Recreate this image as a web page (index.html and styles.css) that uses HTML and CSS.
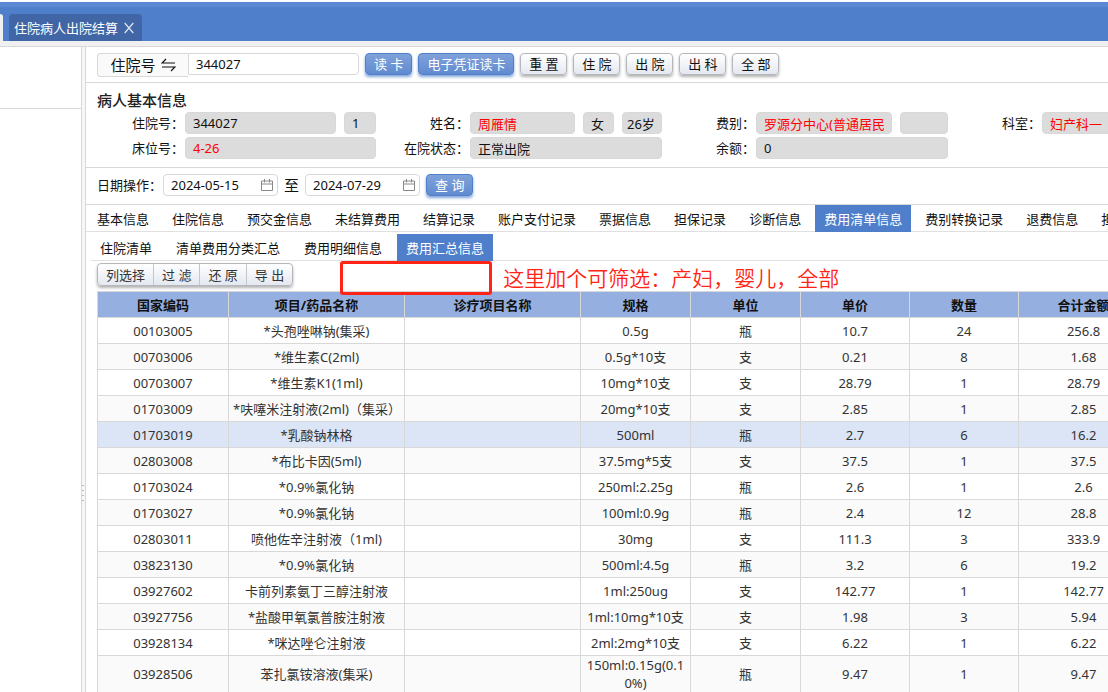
FILE: index.html
```html
<!DOCTYPE html>
<html lang="zh-CN">
<head>
    <meta charset="UTF-8">
    <meta name="viewport" content="width=device-width, initial-scale=1.0">
    <title>住院病人出院结算</title>
    <link rel="stylesheet" href="styles.css">
</head>
<body>
    <header class="topbar">
        <div class="prev-tab"></div>
        <div class="page-tab">
            <span>住院病人出院结算</span>
            <button class="tab-close" aria-label="关闭">
                <svg width="10" height="12" viewBox="0 0 10 12"><path d="M0.7 1L9.3 11M9.3 1L0.7 11" fill="none" stroke="currentColor" stroke-width="1.2"/></svg>
            </button>
        </div>
    </header>

    <div class="layout">
        <aside class="sidebar">
            <div class="sidebar-head"></div>
        </aside>
        <div class="splitter"><i></i><i></i><i></i><i></i></div>

        <main class="content">
            <!-- 查询栏 -->
            <div class="search-bar">
                <div class="search-group">
                    <button class="search-type" id="searchType">住院号
                        <svg width="15" height="14" viewBox="0 0 15 14"><path d="M5 1L1 5H14M1 9H14L10 13" fill="none" stroke="currentColor" stroke-width="1.2"/></svg>
                    </button>
                    <input class="search-input" type="text" value="344027" aria-labelledby="searchType">
                </div>
                <button class="btn btn-primary">读 卡</button>
                <button class="btn btn-primary">电子凭证读卡</button>
                <button class="btn">重 置</button>
                <button class="btn">住 院</button>
                <button class="btn">出 院</button>
                <button class="btn">出 科</button>
                <button class="btn">全 部</button>
            </div>

            <!-- 病人基本信息 -->
            <section class="patient">
                <h2>病人基本信息</h2>
                <div class="patient-grid">
                    <label for="inNo">住院号：</label>
                    <div class="fields"><input id="inNo" value="344027" readonly><input class="w-32" value="1" aria-label="住院次数" readonly></div>
                    <label for="name">姓名：</label>
                    <div class="fields"><input id="name" class="red" value="周雁情" readonly><input class="w-31" value="女" aria-label="性别" readonly><input class="w-40" value="26岁" aria-label="年龄" readonly></div>
                    <label for="feeType">费别：</label>
                    <div class="fields"><input id="feeType" class="red" value="罗源分中心(普通居民" readonly><input class="w-48" value="" aria-label="费别说明" readonly></div>
                    <label for="dept">科室：</label>
                    <div class="fields"><input id="dept" class="red" value="妇产科一" readonly></div>

                    <label for="bed">床位号：</label>
                    <div class="fields"><input id="bed" class="red" value="4-26" readonly></div>
                    <label for="state">在院状态：</label>
                    <div class="fields"><input id="state" value="正常出院" readonly></div>
                    <label for="balance">余额：</label>
                    <div class="fields"><input id="balance" value="0" readonly></div>
                </div>
            </section>

            <!-- 日期 -->
            <div class="date-bar">
                <label for="dateFrom">日期操作：</label>
                <div class="date-box">
                    <input id="dateFrom" type="text" value="2024-05-15">
                    <svg width="12" height="12" viewBox="0 0 12 12"><path d="M0.5 2H11.5V11.5H0.5ZM0.5 5H11.5M3.5 0V3.5M8.5 0V3.5" fill="none" stroke="currentColor"/></svg>
                </div>
                <label class="date-to" for="dateTo">至</label>
                <div class="date-box">
                    <input id="dateTo" type="text" value="2024-07-29">
                    <svg width="12" height="12" viewBox="0 0 12 12"><path d="M0.5 2H11.5V11.5H0.5ZM0.5 5H11.5M3.5 0V3.5M8.5 0V3.5" fill="none" stroke="currentColor"/></svg>
                </div>
                <button class="btn btn-primary">查 询</button>
            </div>

            <nav class="tabs">
                <button>基本信息</button>
                <button>住院信息</button>
                <button>预交金信息</button>
                <button>未结算费用</button>
                <button>结算记录</button>
                <button>账户支付记录</button>
                <button>票据信息</button>
                <button>担保记录</button>
                <button>诊断信息</button>
                <button class="active">费用清单信息</button>
                <button>费别转换记录</button>
                <button>退费信息</button>
                <button>担保信息</button>
            </nav>
            <nav class="tabs sub-tabs">
                <button>住院清单</button>
                <button>清单费用分类汇总</button>
                <button>费用明细信息</button>
                <button class="active">费用汇总信息</button>
            </nav>

            <div class="toolbar">
                <div class="btn-group">
                    <button>列选择</button>
                    <button>过 滤</button>
                    <button>还 原</button>
                    <button>导 出</button>
                </div>
                <div class="mark-box"></div>
                <p class="mark-text">这里加个可筛选：产妇，婴儿，全部</p>
            </div>

            <table class="fee-table">
                <colgroup>
                    <col class="c-code"><col class="c-name"><col class="c-name"><col class="c-spec"><col class="c-spec"><col class="c-num"><col class="c-num"><col class="c-total">
                </colgroup>
                <thead>
                    <tr><th>国家编码</th><th>项目/药品名称</th><th>诊疗项目名称</th><th>规格</th><th>单位</th><th>单价</th><th>数量</th><th>合计金额</th></tr>
                </thead>
                <tbody>
                    <tr><td>00103005</td><td>*头孢唑啉钠(集采)</td><td></td><td>0.5g</td><td>瓶</td><td>10.7</td><td>24</td><td>256.8</td></tr>
                    <tr><td>00703006</td><td>*维生素C(2ml)</td><td></td><td>0.5g*10支</td><td>支</td><td>0.21</td><td>8</td><td>1.68</td></tr>
                    <tr><td>00703007</td><td>*维生素K1(1ml)</td><td></td><td>10mg*10支</td><td>支</td><td>28.79</td><td>1</td><td>28.79</td></tr>
                    <tr><td>01703009</td><td>*呋噻米注射液(2ml)（集采）</td><td></td><td>20mg*10支</td><td>支</td><td>2.85</td><td>1</td><td>2.85</td></tr>
                    <tr class="selected"><td>01703019</td><td>*乳酸钠林格</td><td></td><td>500ml</td><td>瓶</td><td>2.7</td><td>6</td><td>16.2</td></tr>
                    <tr><td>02803008</td><td>*布比卡因(5ml)</td><td></td><td>37.5mg*5支</td><td>支</td><td>37.5</td><td>1</td><td>37.5</td></tr>
                    <tr><td>01703024</td><td>*0.9%氯化钠</td><td></td><td>250ml:2.25g</td><td>瓶</td><td>2.6</td><td>1</td><td>2.6</td></tr>
                    <tr><td>01703027</td><td>*0.9%氯化钠</td><td></td><td>100ml:0.9g</td><td>瓶</td><td>2.4</td><td>12</td><td>28.8</td></tr>
                    <tr><td>02803011</td><td>喷他佐辛注射液（1ml)</td><td></td><td>30mg</td><td>支</td><td>111.3</td><td>3</td><td>333.9</td></tr>
                    <tr><td>03823130</td><td>*0.9%氯化钠</td><td></td><td>500ml:4.5g</td><td>瓶</td><td>3.2</td><td>6</td><td>19.2</td></tr>
                    <tr><td>03927602</td><td>卡前列素氨丁三醇注射液</td><td></td><td>1ml:250ug</td><td>支</td><td>142.77</td><td>1</td><td>142.77</td></tr>
                    <tr><td>03927756</td><td>*盐酸甲氧氯普胺注射液</td><td></td><td>1ml:10mg*10支</td><td>支</td><td>1.98</td><td>3</td><td>5.94</td></tr>
                    <tr><td>03928134</td><td>*咪达唑仑注射液</td><td></td><td>2ml:2mg*10支</td><td>支</td><td>6.22</td><td>1</td><td>6.22</td></tr>
                    <tr><td>03928506</td><td>苯扎氯铵溶液(集采)</td><td></td><td>150ml:0.15g(0.10%)</td><td>瓶</td><td>9.47</td><td>1</td><td>9.47</td></tr>
                </tbody>
            </table>
        </main>
    </div>
</body>
</html>
```
FILE: styles.css
```css
* {
    margin: 0;
    padding: 0;
    box-sizing: border-box;
}

body {
    height: 100vh;
    display: flex;
    flex-direction: column;
    overflow: hidden;
    font-family: "Noto Sans", "Noto Sans CJK SC", sans-serif;
    font-size: 13px;
    line-height: 18px;
    color: #111;
    background: #fff;
}

button,
input {
    font: inherit;
    color: inherit;
    border: none;
    background: none;
    outline: none;
}

button {
    cursor: pointer;
    white-space: nowrap;
}

/* 顶部页签 */
.topbar {
    flex: none;
    display: flex;
    align-items: flex-end;
    gap: 6px;
    height: 41px;
    border-top: 2px solid #fff;
    background: linear-gradient(#5a88d2 5px, #4f7fcb 5px);
}

.prev-tab {
    width: 3px;
    height: 27px;
    background: #f0f0f0;
    border-radius: 0 4px 0 0;
}

.page-tab {
    display: flex;
    align-items: center;
    gap: 6px;
    height: 27px;
    padding: 0 8px 0 5px;
    color: #fff;
    background: #4066a6;
    border-radius: 4px 4px 0 0;
}

.tab-close {
    display: flex;
    color: #dfe7f5;
}

.layout {
    flex: 1;
    min-height: 0;
    display: flex;
    border-top: 5px solid #f0f0f0;
}

.sidebar {
    flex: none;
    width: 82px;
    border-top: 1px solid #d8d8d8;
    border-right: 1px solid #d8d8d8;
}

.sidebar-head {
    height: 62px;
    border-bottom: 1px solid #d8d8d8;
}

.splitter {
    flex: none;
    width: 4px;
    display: flex;
    flex-direction: column;
    justify-content: center;
    gap: 4px;
    padding-top: 246px;
    border-top: 1px solid #d8d8d8;
    border-right: 1px solid #d8d8d8;
    background: #f7f7f7;
}

.splitter i {
    width: 2px;
    height: 1px;
    background: #bbb;
}

.content {
    flex: 1;
    min-width: 0;
    overflow: hidden;
    border-top: 1px solid #d8d8d8;
}

/* 查询栏 */
.search-bar {
    display: flex;
    align-items: flex-start;
    gap: 6px;
    height: 36px;
    padding: 6px 11px 0;
    border-bottom: 1px solid #d8d8d8;
}

.search-group {
    display: flex;
    align-items: flex-start;
    width: 262px;
}

.search-type {
    display: flex;
    align-items: center;
    justify-content: center;
    gap: 5px;
    width: 91px;
    height: 24px;
    font-size: 15px;
    border: 1px solid #d8d8d8;
    border-right: none;
    border-radius: 4px 0 0 4px;
    background: #fafafa;
}

.search-input {
    flex: 1;
    min-width: 0;
    height: 22px;
    padding: 0 7px;
    border: 1px solid #d8d8d8;
    border-radius: 0 4px 4px 0;
}

.btn {
    flex: none;
    min-width: 47px;
    height: 22px;
    padding: 0 7px;
    line-height: 20px;
    border: 1px solid #b5b7bb;
    border-radius: 4px;
    background: linear-gradient(#fff, #e4e8f0);
    box-shadow: 0 2px 3px rgba(0, 0, 0, 0.3);
}

.btn-primary {
    padding: 0 8px;
    color: #fff;
    border-color: #4f7fcb;
    background: linear-gradient(#80a2da, #618bd0);
    box-shadow: 0 2px 3px rgba(79, 127, 203, 0.7);
}

/* 病人基本信息 */
.patient {
    height: 85px;
    padding: 7px 0 0 11px;
    border-bottom: 1px solid #d8d8d8;
}

.patient h2 {
    margin-bottom: 2px;
    font-size: 15px;
    line-height: 20px;
    font-weight: 500;
    color: #222;
}

.patient-grid {
    display: grid;
    grid-template-columns: 88px 191px 94px 192px 94px 192px 94px 192px;
    row-gap: 3px;
    align-items: center;
}

.patient-grid label {
    text-align: right;
    padding-right: 1px;
}

.fields {
    display: flex;
    gap: 8px;
}

.fields input {
    flex: 1;
    min-width: 0;
    height: 22px;
    padding: 0 7px;
    border: 1px solid #d8d8d8;
    border-radius: 4px;
    background: #dcdcdc;
}

.fields .w-31 {
    flex: 0 0 31px;
}

.fields .w-32 {
    flex: 0 0 32px;
}

.fields .w-40 {
    flex: 0 0 40px;
    padding: 0 4px;
}

.fields .w-48 {
    flex: 0 0 48px;
}

.fields .red {
    color: #f00;
}

/* 日期 */
.date-bar {
    display: flex;
    align-items: center;
    height: 37px;
    padding: 0 11px 2px;
    border-bottom: 1px solid #d8d8d8;
}

.date-bar label {
    margin-right: 1px;
}

.date-box {
    display: flex;
    align-items: center;
    width: 115px;
    height: 22px;
    padding: 0 4px 0 7px;
    border: 1px solid #d8d8d8;
    border-radius: 4px;
    color: #888;
}

.date-box input {
    flex: 1;
    min-width: 0;
    color: #111;
}

.date-bar .date-to {
    margin: 0 6px;
    font-size: 15px;
}

.date-bar .btn {
    margin-left: 6px;
}

/* 页签 */
.tabs {
    display: flex;
    gap: 5px;
    height: 27px;
    padding-left: 2px;
    border-bottom: 1px solid #e0e0e0;
}

.tabs button {
    flex: none;
    height: 27px;
    padding: 0 9px;
}

.tabs .active {
    color: #fff;
    background: #4f7fcb;
}

.sub-tabs {
    gap: 6px;
    height: 29px;
    padding: 2px 0 0;
    margin-left: 5px;
}

/* 工具栏 */
.toolbar {
    display: flex;
    align-items: flex-start;
    height: 30px;
    padding: 0 11px;
}

.btn-group {
    display: flex;
    margin-top: 2px;
    border: 1px solid #b5b7bb;
    border-radius: 4px;
    background: linear-gradient(#fff, #e4e8f0);
    box-shadow: 0 2px 3px rgba(0, 0, 0, 0.3);
}

.btn-group button {
    height: 21px;
    padding: 0 8px;
    line-height: 20px;
    color: #333;
}

.btn-group button + button {
    border-left: 1px solid #c4c6ca;
}

.mark-box {
    position: relative;
    z-index: 1;
    width: 152px;
    height: 34px;
    margin-left: 47px;
    border: 3px solid #ff2416;
    border-radius: 3px;
}

.mark-text {
    margin-left: 11px;
    font-size: 21px;
    line-height: 34px;
    font-weight: 350;
    color: #ff2416;
    white-space: nowrap;
}

/* 费用汇总表 */
.fee-table {
    width: calc(100% + 30px);
    margin-left: 11px;
    table-layout: fixed;
    border-collapse: collapse;
    text-align: center;
}

.c-code {
    width: 131px;
}

.c-name {
    width: 176px;
}

.c-spec {
    width: 110px;
}

.c-num {
    width: 109px;
}

.fee-table th,
.fee-table td {
    height: 26px;
    padding: 0 4px;
    line-height: 18px;
    border: 1px solid #d8d8d8;
    word-break: break-all;
}

.fee-table th {
    font-weight: 700;
    background: #95b0e0;
}

.fee-table td {
    color: #333;
}

.fee-table tbody tr:nth-child(even) {
    background: #fafafa;
}

.fee-table tbody .selected {
    background: #dce5f6;
}
```
